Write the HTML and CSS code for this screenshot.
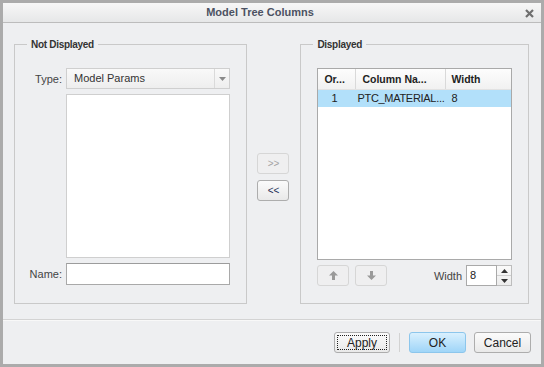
FILE: index.html
```html
<!DOCTYPE html>
<html lang="en">
<head>
  <meta charset="UTF-8">
  <title>Model Tree Columns</title>
  <link rel="stylesheet" href="styles.css">
</head>
<body>
  <div class="dialog">
    <div class="titlebar">
      <span class="title">Model Tree Columns</span>
      <svg class="close" width="9" height="9" viewBox="0 0 9 9">
        <path d="M1 1 L8 8 M8 1 L1 8" stroke="#6f6f6f" stroke-width="2.2" />
      </svg>
    </div>

    <div class="main">
      <fieldset class="group group-left">
        <legend>Not Displayed</legend>
        <div class="form">
          <label class="label">Type:</label>
          <div class="combo">
            <span class="combo-text">Model Params</span>
            <span class="combo-drop">
              <svg width="7" height="4" viewBox="0 0 7 4"><path d="M0 0 H7 L3.5 4 Z" fill="#8a8a8a" /></svg>
            </span>
          </div>
          <span></span>
          <div class="listbox"></div>
          <label class="label">Name:</label>
          <div class="textbox"></div>
        </div>
      </fieldset>

      <div class="transfer">
        <button class="btn btn-small" disabled>&gt;&gt;</button>
        <button class="btn btn-small">&lt;&lt;</button>
      </div>

      <fieldset class="group group-right">
        <legend>Displayed</legend>
        <div class="columns">
          <div class="table">
            <div class="table-head">
              <div class="cell">Or...</div>
              <div class="cell">Column Na...</div>
              <div class="cell">Width</div>
            </div>
            <div class="table-row selected">
              <div class="cell cell-order">1</div>
              <div class="cell cell-name">PTC_MATERIAL...</div>
              <div class="cell">8</div>
            </div>
          </div>
          <div class="tools">
            <button class="btn btn-icon" disabled>
              <svg width="9" height="9" viewBox="0 0 9 9"><path d="M4.5 0 L9 4.5 H6 V9 H3 V4.5 H0 Z" fill="#9a9a9a" /></svg>
            </button>
            <button class="btn btn-icon" disabled>
              <svg width="9" height="9" viewBox="0 0 9 9"><path d="M4.5 9 L9 4.5 H6 V0 H3 V4.5 H0 Z" fill="#9a9a9a" /></svg>
            </button>
            <span class="spacer"></span>
            <span class="label">Width</span>
            <div class="spinner">
              <div class="spinner-value">8</div>
              <div class="spinner-arrows">
                <span class="arrow"><svg width="7" height="4" viewBox="0 0 7 4"><path d="M0 4 H7 L3.5 0 Z" fill="#333" /></svg></span>
                <span class="arrow"><svg width="7" height="4" viewBox="0 0 7 4"><path d="M0 0 H7 L3.5 4 Z" fill="#333" /></svg></span>
              </div>
            </div>
          </div>
        </div>
      </fieldset>
    </div>

    <div class="footer">
      <button class="btn btn-wide focused"><span class="focus-ring">Apply</span></button>
      <span class="divider"></span>
      <button class="btn btn-wide btn-primary">OK</button>
      <button class="btn btn-wide">Cancel</button>
    </div>
  </div>
</body>
</html>
```

FILE: styles.css
```css
* {
  box-sizing: border-box;
  margin: 0;
  padding: 0;
}

body {
  font-family: "Liberation Sans", Arial, sans-serif;
  font-size: 11px;
  color: #333;
  background: #ffffff;
}

.dialog {
  width: 544px;
  height: 367px;
  border: 3px solid #ababab;
  background: #eeeff1;
  display: flex;
  flex-direction: column;
}

.titlebar {
  height: 20px;
  flex: none;
  display: flex;
  align-items: center;
  justify-content: center;
  position: relative;
  padding-right: 24px;
  background: linear-gradient(#f7f7f7, #e6e7e8);
  border-bottom: 1px solid #bcbcbc;

  & > .title {
    font-weight: bold;
    font-size: 11px;
    color: #4c5262;
    line-height: 13px;
  }

  & > .close {
    position: absolute;
    right: 7px;
    top: 6px;
  }
}

.main {
  flex: 1;
  display: flex;
  padding: 15px 12px 0 11px;
}

.group {
  border: 1px solid #c9c9c9;
  padding: 0;
  height: 266px;
  min-width: 0;

  & > legend {
    margin-left: 12px;
    padding: 0 4px;
    font-weight: bold;
    font-size: 10px;
    letter-spacing: -0.3px;
    line-height: 13px;
    color: #333;
  }
}

.group-left {
  width: 233px;

  & > .form {
    display: grid;
    grid-template-columns: 47px 164px;
    grid-template-rows: 21px 164px 22px;
    column-gap: 4px;
    row-gap: 5px;
    padding: 17px 16px 0 0;
  }
}

.label {
  align-self: center;
  justify-self: end;
  color: #444;
}

.combo {
  display: flex;
  background: linear-gradient(#f9f9f9, #eeeeee);
  border: 1px solid #cfcfcf;

  & > .combo-text {
    flex: 1;
    padding-left: 7px;
    line-height: 19px;
    color: #333;
  }

  & > .combo-drop {
    width: 15px;
    display: flex;
    align-items: center;
    justify-content: center;
    border-left: 1px solid #dadada;
  }
}

.listbox {
  background: #ffffff;
  border: 1px solid #cfcfcf;
}

.textbox {
  background: #ffffff;
  border: 1px solid #a9a9a9;
  border-top-color: #9c9c9c;
}

.transfer {
  width: 54px;
  display: flex;
  flex-direction: column;
  align-items: center;
  justify-content: center;
  gap: 6px;
  padding-bottom: 4px;
}

.btn {
  font-family: "Liberation Sans", Arial, sans-serif;
  font-size: 11px;
  color: #222;
  height: 21px;
  border: 1px solid #adadad;
  border-radius: 3px;
  background: linear-gradient(#fbfbfb, #e9e9e9);
  display: flex;
  align-items: center;
  justify-content: center;

  &:disabled {
    border-color: #d6d6d6;
    background: #efeff0;
    color: #a4a4a4;
  }
}

.btn-small {
  width: 32px;
  color: #1f2f55;
  font-size: 10px;
}

.group-right {
  width: 229px;

  & > .columns {
    display: flex;
    flex-direction: column;
    gap: 5px;
    padding: 17px 16px 0 16px;
  }
}

.table {
  height: 192px;
  background: #ffffff;
  border: 1px solid #a9a9a9;

  .cell {
    white-space: nowrap;
    overflow: hidden;
  }

  & > .table-head {
    display: grid;
    grid-template-columns: 38px 90px 1fr;
    height: 21px;
    background: linear-gradient(#fdfdfd, #f1f1f1);
    border-bottom: 1px solid #e2e2e2;

    & > .cell {
      line-height: 20px;
      padding-left: 6px;
      color: #222;
      font-weight: bold;
      font-size: 10.5px;
      border-right: 1px solid #d9d9d9;
    }

    & > .cell:last-child {
      border-right: none;
      padding-left: 5px;
    }
  }

  & > .table-row {
    display: grid;
    grid-template-columns: 38px 90px 1fr;
    height: 17px;
    line-height: 17px;

    &.selected {
      background: #b2e0fa;
    }

    & > .cell {
      padding-left: 5px;
      color: #222;
    }

    & > .cell-order {
      padding-left: 13px;
    }

    & > .cell-name {
      padding-left: 1px;
      letter-spacing: -0.3px;
    }
  }
}

.tools {
  display: flex;
  align-items: center;
  height: 21px;
  gap: 6px;

  & > .spacer {
    flex: 1;
  }

  & > .label {
    margin-right: -2px;
  }
}

.btn-icon {
  width: 32px;
}

.spinner {
  display: flex;
  height: 21px;

  & > .spinner-value {
    width: 31px;
    background: #ffffff;
    border: 1px solid #a9a9a9;
    padding-left: 3px;
    line-height: 19px;
    color: #222;
  }

  & > .spinner-arrows {
    width: 15px;
    display: flex;
    flex-direction: column;
    border: 1px solid #bdbdbd;
    border-left: none;
    background: linear-gradient(#fafafa, #ececec);

    & > .arrow {
      flex: 1;
      display: flex;
      align-items: center;
      justify-content: center;
    }

    & > .arrow + .arrow {
      border-top: 1px solid #d0d0d0;
    }
  }
}

.footer {
  height: 45px;
  flex: none;
  border-top: 1px solid #d3d3d3;
  box-shadow: inset 0 1px 0 #f8f8f8;
  display: flex;
  align-items: flex-start;
  justify-content: flex-end;
  padding: 12px 10px 0 0;
  gap: 8px;

  & > .divider {
    width: 1px;
    height: 19px;
    margin: 1px 1px 0 1px;
    background: #d2d2d2;
  }
}

.btn-wide {
  width: 57px;
  font-size: 12px;
}

.btn-primary {
  border-color: #8cc6ec;
  background: linear-gradient(#d9f0fe, #9fd5f8);
}

.focused {
  width: 56px;
  padding: 2px;

  & > .focus-ring {
    flex: 1;
    align-self: stretch;
    border: 1px dotted #222;
    display: flex;
    align-items: center;
    justify-content: center;
  }
}
```
